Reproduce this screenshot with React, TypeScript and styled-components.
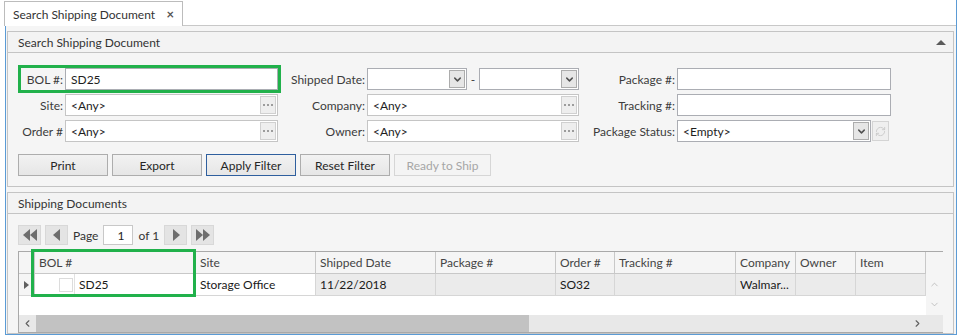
import styled, { createGlobalStyle } from "styled-components";
import { ChevronDown, ChevronUp, ChevronLeft, ChevronRight, RefreshCw } from "lucide-react";

const GlobalStyle = createGlobalStyle`
  html, body {
    margin: 0;
    padding: 0;
    background: #ffffff;
  }
  body {
    font-family: "Segoe UI", Lato, "Open Sans", sans-serif;
    font-size: 12px;
    color: #1e1e1e;
  }
`;

const columns = [
  { key: "ind", title: "", width: 16 },
  { key: "bol", title: "BOL #", width: 161 },
  { key: "site", title: "Site", width: 120 },
  { key: "shipped", title: "Shipped Date", width: 120 },
  { key: "package", title: "Package #", width: 120 },
  { key: "order", title: "Order #", width: 59 },
  { key: "tracking", title: "Tracking #", width: 121 },
  { key: "company", title: "Company", width: 60 },
  { key: "owner", title: "Owner", width: 60 },
  { key: "item", title: "Item", width: 70 },
];

const Dots = () => (
  <svg width="10" height="4" viewBox="0 0 10 4">
    <rect x="0" y="1" width="2" height="2" fill="#9c9c9c" />
    <rect x="4" y="1" width="2" height="2" fill="#9c9c9c" />
    <rect x="8" y="1" width="2" height="2" fill="#9c9c9c" />
  </svg>
);

const Lookup = ({ value }: { value: string }) => (
  <LookupBox>
    <ComboText>{value}</ComboText>
    <EllipsisButton>
      <Dots />
    </EllipsisButton>
  </LookupBox>
);

const App = () => {
  return (
    <>
      <GlobalStyle />
      <Page>
        <TabStrip>
          <Tab>
            Search Shipping Document
            <TabClose>×</TabClose>
          </Tab>
          <TabFill />
        </TabStrip>

        <Frame>
          <Group>
            <GroupHeader>
              Search Shipping Document
              <CollapseCaret />
            </GroupHeader>
            <GroupBody>
              <FormGrid>
                <Field $labelWidth={42} $highlight>
                  <Label>BOL #:</Label>
                  <TextBox>SD25</TextBox>
                </Field>
                <Field $labelWidth={87}>
                  <Label>Shipped Date:</Label>
                  <DateRange>
                    <Combo $width={100}>
                      <ComboText />
                      <DropButton>
                        <ChevronDown size={11} strokeWidth={3.2} color="#505050" />
                      </DropButton>
                    </Combo>
                    <Dash>-</Dash>
                    <Combo $width={100}>
                      <ComboText />
                      <DropButton>
                        <ChevronDown size={11} strokeWidth={3.2} color="#505050" />
                      </DropButton>
                    </Combo>
                  </DateRange>
                </Field>
                <Field $labelWidth={96}>
                  <Label>Package #:</Label>
                  <TextBox />
                </Field>

                <Field $labelWidth={42}>
                  <Label>Site:</Label>
                  <Lookup value="<Any>" />
                </Field>
                <Field $labelWidth={87}>
                  <Label>Company:</Label>
                  <Lookup value="<Any>" />
                </Field>
                <Field $labelWidth={96}>
                  <Label>Tracking #:</Label>
                  <TextBox />
                </Field>

                <Field $labelWidth={42}>
                  <Label>Order #</Label>
                  <Lookup value="<Any>" />
                </Field>
                <Field $labelWidth={87}>
                  <Label>Owner:</Label>
                  <Lookup value="<Any>" />
                </Field>
                <Field $labelWidth={96}>
                  <Label>Package Status:</Label>
                  <StatusWrap>
                    <Combo $width={194}>
                      <ComboText>&lt;Empty&gt;</ComboText>
                      <DropButton>
                        <ChevronDown size={11} strokeWidth={3.2} color="#505050" />
                      </DropButton>
                    </Combo>
                    <RefreshButton>
                      <RefreshCw size={11} strokeWidth={2} color="#c9c9c9" />
                    </RefreshButton>
                  </StatusWrap>
                </Field>
              </FormGrid>

              <ButtonRow>
                <ActionButton>Print</ActionButton>
                <ActionButton>Export</ActionButton>
                <ActionButton $focused>Apply Filter</ActionButton>
                <ActionButton>Reset Filter</ActionButton>
                <ActionButton $disabled $width={97}>
                  Ready to Ship
                </ActionButton>
              </ButtonRow>
            </GroupBody>
          </Group>

          <Group $last>
            <GroupHeader>Shipping Documents</GroupHeader>
            <ListBody>
              <Pager>
                <PagerButton>
                  <svg width="16" height="12" viewBox="0 0 16 12">
                    <polygon points="8,0 8,12 1,6" fill="#6e6e6e" />
                    <polygon points="15,0 15,12 8,6" fill="#6e6e6e" />
                  </svg>
                </PagerButton>
                <PagerButton>
                  <svg width="8" height="12" viewBox="0 0 8 12">
                    <polygon points="7,0 7,12 0,6" fill="#6e6e6e" />
                  </svg>
                </PagerButton>
                <PagerText>Page</PagerText>
                <PageInput>1</PageInput>
                <PagerText>of 1</PagerText>
                <PagerButton>
                  <svg width="8" height="12" viewBox="0 0 8 12">
                    <polygon points="1,0 1,12 8,6" fill="#6e6e6e" />
                  </svg>
                </PagerButton>
                <PagerButton>
                  <svg width="16" height="12" viewBox="0 0 16 12">
                    <polygon points="1,0 1,12 8,6" fill="#6e6e6e" />
                    <polygon points="8,0 8,12 15,6" fill="#6e6e6e" />
                  </svg>
                </PagerButton>
              </Pager>

              <DataGrid $cols={columns.map((c) => `${c.width}px`).join(" ")}>
                {columns.map((c) => (
                  <HeaderCell key={c.key}>{c.title}</HeaderCell>
                ))}
                <HeaderCell $blank />

                <RowIndicator>
                  <svg width="5" height="8" viewBox="0 0 5 8">
                    <polygon points="0,0 5,4 0,8" fill="#606060" />
                  </svg>
                </RowIndicator>
                <BolCell>
                  <CheckArea>
                    <CheckBox />
                  </CheckArea>
                  <CellText>SD25</CellText>
                </BolCell>
                <Cell>Storage Office</Cell>
                <Cell $shaded>11/22/2018</Cell>
                <Cell $shaded />
                <Cell $shaded>SO32</Cell>
                <Cell $shaded />
                <Cell $shaded>Walmar...</Cell>
                <Cell $shaded />
                <Cell $shaded />

                <VScroll>
                  <ChevronUp size={11} strokeWidth={1.6} color="#b0b0b0" />
                  <ChevronDown size={11} strokeWidth={1.6} color="#b0b0b0" />
                </VScroll>

                <EmptyArea />

                <HScroll>
                  <ScrollArrow>
                    <ChevronLeft size={11} strokeWidth={2.4} color="#606060" />
                  </ScrollArrow>
                  <ScrollTrack>
                    <ScrollThumb style={{ width: 493 }} />
                  </ScrollTrack>
                  <ScrollArrow>
                    <ChevronRight size={11} strokeWidth={2.4} color="#606060" />
                  </ScrollArrow>
                </HScroll>

                <Highlight />
              </DataGrid>
            </ListBody>
          </Group>
        </Frame>
      </Page>
    </>
  );
};

const Page = styled.div`
  width: 956px;
  height: 335px;
  border-right: 1px solid #5b9bd5;
  display: flex;
  flex-direction: column;
`;

const TabStrip = styled.div`
  display: flex;
  align-items: flex-end;
  height: 26px;
  padding-left: 4px;
  box-sizing: border-box;
`;

const Tab = styled.div`
  display: flex;
  align-items: center;
  height: 25px;
  box-sizing: border-box;
  padding: 0 8px 0 8px;
  width: 179px;
  border: 1px solid #bcbcbc;
  border-bottom: none;
  background: #ffffff;
  color: #333333;
  font-size: 12px;
`;

const TabClose = styled.span`
  margin-left: auto;
  font-size: 13px;
  font-weight: bold;
  color: #555555;
`;

const TabFill = styled.div`
  flex: 1;
  border-bottom: 1px solid #c8c8c8;
`;

const Frame = styled.div`
  flex: 1;
  margin-left: 5px;
  border-left: 1px solid #5b9bd5;
  border-bottom: 1px solid #5b9bd5;
  background: #f5f5f5;
  padding: 5px 2px 0 1px;
  display: flex;
  flex-direction: column;
  gap: 5px;
`;

const Group = styled.div<{ $last?: boolean }>`
  border: 1px solid #c4c4c4;
  background: #f5f5f5;
  ${(p) => (p.$last ? "flex: 1; display: flex; flex-direction: column;" : "")}
`;

const GroupHeader = styled.div`
  height: 20px;
  display: flex;
  align-items: center;
  padding: 0 10px;
  background: #f3f3f3;
  border-bottom: 1px solid #c4c4c4;
  color: #333333;
`;

const CollapseCaret = styled.span`
  margin-left: auto;
  margin-right: -3px;
  width: 0;
  height: 0;
  border-left: 5px solid transparent;
  border-right: 5px solid transparent;
  border-bottom: 5px solid #5a5a5a;
`;

const GroupBody = styled.div`
  padding: 15px 10px 10px 10px;
`;

const FormGrid = styled.div`
  display: grid;
  grid-template-columns: 257px 301px 312px;
  row-gap: 4px;
  margin-left: 3px;
`;

const Field = styled.div<{ $labelWidth: number; $highlight?: boolean }>`
  display: grid;
  grid-template-columns: ${(p) => p.$labelWidth}px 1fr;
  column-gap: 2px;
  height: 22px;
  align-items: center;
  ${(p) => (p.$highlight ? `outline: 3px solid #21b14b; outline-offset: 0;` : "")}
`;

const Label = styled.span`
  text-align: right;
  color: #3c3c3c;
  white-space: nowrap;
`;

const TextBox = styled.div`
  height: 22px;
  box-sizing: border-box;
  border: 1px solid #abadb3;
  background: #ffffff;
  padding: 0 5px;
  display: flex;
  align-items: center;
  color: #1e1e1e;
`;

const LookupBox = styled.div`
  height: 22px;
  box-sizing: border-box;
  border: 1px solid #c5c5c5;
  background: #ffffff;
  display: flex;
  align-items: center;
  padding: 1px;
`;

const ComboText = styled.span`
  flex: 1;
  padding-left: 4px;
  color: #1e1e1e;
`;

const EllipsisButton = styled.span`
  width: 16px;
  height: 18px;
  box-sizing: border-box;
  border: 1px solid #d0d0d0;
  background: #eeeeee;
  display: flex;
  align-items: center;
  justify-content: center;
`;

const DateRange = styled.div`
  display: flex;
  align-items: center;
`;

const Dash = styled.span`
  width: 12px;
  text-align: center;
  color: #3c3c3c;
`;

const Combo = styled.div<{ $width: number }>`
  width: ${(p) => p.$width}px;
  height: 22px;
  box-sizing: border-box;
  border: 1px solid #abadb3;
  background: #ffffff;
  display: flex;
  align-items: center;
  padding: 1px;
`;

const DropButton = styled.span`
  width: 16px;
  height: 18px;
  box-sizing: border-box;
  border: 1px solid #acacac;
  background: #e6e6e6;
  display: flex;
  align-items: center;
  justify-content: center;
`;

const StatusWrap = styled.div`
  display: flex;
  align-items: center;
  gap: 1px;
`;

const RefreshButton = styled.span`
  width: 17px;
  height: 20px;
  box-sizing: border-box;
  border: 1px solid #d4d4d4;
  background: #efefef;
  display: flex;
  align-items: center;
  justify-content: center;
`;

const ButtonRow = styled.div`
  display: flex;
  gap: 4px;
  margin-top: 12px;
`;

const ActionButton = styled.div<{ $focused?: boolean; $disabled?: boolean; $width?: number }>`
  width: ${(p) => p.$width ?? 90}px;
  height: 22px;
  box-sizing: border-box;
  display: flex;
  align-items: center;
  justify-content: center;
  border: 1px solid ${(p) => (p.$focused ? "#2f5f9e" : p.$disabled ? "#d6d6d6" : "#adadad")};
  background: ${(p) => (p.$disabled ? "#f4f4f4" : "linear-gradient(#f2f2f2, #e6e6e6)")};
  color: ${(p) => (p.$disabled ? "#a6a6a6" : "#262626")};
`;

const ListBody = styled.div`
  flex: 1;
  padding: 11px 10px 0 10px;
  display: flex;
  flex-direction: column;
`;

const Pager = styled.div`
  display: flex;
  align-items: center;
  gap: 4px;
  height: 20px;
`;

const PagerButton = styled.span`
  width: 23px;
  height: 20px;
  box-sizing: border-box;
  border: 1px solid #d8d8d8;
  background: #e4e4e4;
  display: flex;
  align-items: center;
  justify-content: center;
`;

const PagerText = styled.span`
  color: #333333;
  padding: 0 1px;
`;

const PageInput = styled.span`
  width: 30px;
  height: 20px;
  box-sizing: border-box;
  border: 1px solid #c8c8c8;
  background: #ffffff;
  display: flex;
  align-items: center;
  padding-left: 13px;
`;

const DataGrid = styled.div<{ $cols: string }>`
  position: relative;
  margin-top: 6px;
  width: 925px;
  box-sizing: border-box;
  border: 1px solid #a9a9a9;
  background: #ffffff;
  display: grid;
  grid-template-columns: ${(p) => p.$cols} 17px;
  grid-template-rows: 22px 22px 19px 17px;
`;

const HeaderCell = styled.div<{ $blank?: boolean }>`
  background: #f5f5f5;
  border-right: ${(p) => (p.$blank ? "none" : "1px solid #c8c8c8")};
  border-bottom: ${(p) => (p.$blank ? "none" : "1px solid #c8c8c8")};
  display: flex;
  align-items: center;
  padding-left: 4px;
  color: #444444;
  white-space: nowrap;
  overflow: hidden;
`;

const RowIndicator = styled.div`
  background: #f5f5f5;
  border-right: 1px solid #c8c8c8;
  border-bottom: 1px solid #d6d6d6;
  display: flex;
  align-items: center;
  justify-content: center;
`;

const Cell = styled.div<{ $shaded?: boolean }>`
  background: ${(p) => (p.$shaded ? "#ebebeb" : "#ffffff")};
  border-right: 1px solid #d6d6d6;
  border-bottom: 1px solid #d6d6d6;
  display: flex;
  align-items: center;
  padding-left: 4px;
  color: #1a1a1a;
  white-space: nowrap;
  overflow: hidden;
`;

const BolCell = styled.div`
  display: flex;
  background: #ffffff;
  border-right: 1px solid #d6d6d6;
  border-bottom: 1px solid #d6d6d6;
`;

const CheckArea = styled.div`
  width: 40px;
  box-sizing: border-box;
  border-right: 1px solid #e2e2e2;
  display: flex;
  align-items: center;
  justify-content: flex-end;
  padding-right: 1px;
`;

const CheckBox = styled.span`
  width: 12px;
  height: 12px;
  border: 1px solid #dcdcdc;
  background: #ffffff;
`;

const CellText = styled.span`
  display: flex;
  align-items: center;
  padding-left: 4px;
  color: #1a1a1a;
`;

const VScroll = styled.div`
  grid-column: 11;
  grid-row: 2 / span 2;
  background: #f5f5f5;
  display: flex;
  flex-direction: column;
  align-items: center;
  justify-content: space-around;
`;

const EmptyArea = styled.div`
  grid-column: 1 / span 10;
  grid-row: 3;
  background: #ffffff;
`;

const HScroll = styled.div`
  grid-column: 1 / span 11;
  grid-row: 4;
  display: flex;
  align-items: stretch;
  background: #e8e8e8;
  padding-right: 17px;
`;

const ScrollArrow = styled.span`
  width: 17px;
  display: flex;
  align-items: center;
  justify-content: center;
`;

const ScrollTrack = styled.div`
  flex: 1;
  display: flex;
  align-items: stretch;
`;

const ScrollThumb = styled.div`
  background: #c2c2c2;
`;

const Highlight = styled.div`
  position: absolute;
  left: 12px;
  top: -3px;
  width: 165px;
  height: 48px;
  box-sizing: border-box;
  border: 3px solid #21b14b;
  pointer-events: none;
`;

export default App;
